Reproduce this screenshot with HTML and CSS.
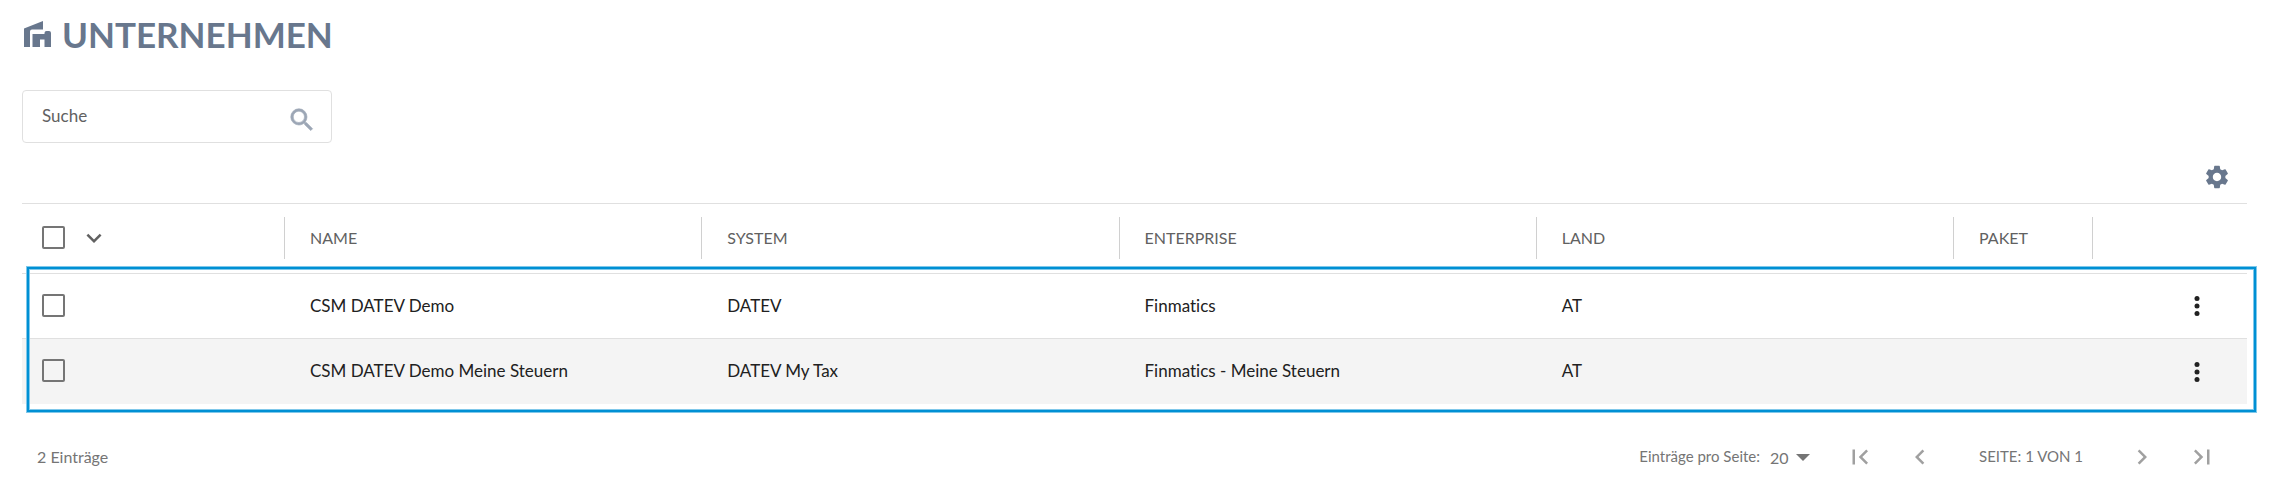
FILE: index.html
```html
<!DOCTYPE html>
<html lang="de">
<head>
<meta charset="UTF-8">
<meta name="viewport" content="width=device-width, initial-scale=1">
<title>Unternehmen</title>
<link rel="stylesheet" href="styles.css">
</head>
<body>

<h1>
  <svg class="title-icon" viewBox="0 0 27 26" aria-hidden="true"><path d="M0 7.500L19 0v8.500H8q-2 0-2 2V26H0z"/><path d="M8.500 13h12v-1q0-2 2-2h2.500q2 0 2 2v14h-6.500v-7.500h-4.500V26h-7.500z"/></svg>
  Unternehmen
</h1>

<div class="search">
  <input type="search" placeholder="Suche" aria-label="Suche">
  <svg class="icon" viewBox="0 0 24 24" aria-hidden="true"><path d="M15.5 14h-.79l-.28-.27A6.47 6.47 0 0 0 16 9.5 6.5 6.5 0 1 0 9.5 16c1.61 0 3.09-.59 4.23-1.57l.27.28v.79l5 4.99L20.49 19l-4.99-5zm-6 0C7.01 14 5 11.99 5 9.5S7.01 5 9.5 5 14 7.01 14 9.5 11.99 14 9.5 14z"/></svg>
</div>

<div class="toolbar">
  <button class="settings" aria-label="Einstellungen">
    <svg viewBox="0 0 24 24"><path d="M19.14 12.94c.04-.3.06-.61.06-.94 0-.32-.02-.64-.07-.94l2.03-1.58c.18-.14.23-.41.12-.61l-1.92-3.32c-.12-.22-.37-.29-.59-.22l-2.39.96c-.5-.38-1.03-.7-1.62-.94l-.36-2.54c-.04-.24-.24-.41-.48-.41h-3.84c-.24 0-.43.17-.47.41l-.36 2.54c-.59.24-1.13.57-1.62.94l-2.39-.96c-.22-.08-.47 0-.59.22L2.740 8.870c-.12.21-.08.47.12.61l2.03 1.58c-.05.3-.09.63-.09.94s.02.64.07.94l-2.03 1.58c-.18.14-.23.41-.12.61l1.92 3.32c.12.22.37.29.59.22l2.39-.96c.5.38 1.03.7 1.62.94l.36 2.54c.05.24.24.41.48.41h3.84c.24 0 .44-.17.47-.41l.36-2.54c.59-.24 1.13-.56 1.62-.94l2.39.96c.22.08.47 0 .59-.22l1.92-3.32c.12-.22.07-.47-.12-.61l-2.01-1.58zM12 15.600c-1.98 0-3.6-1.62-3.6-3.6s1.62-3.6 3.6-3.6 3.6 1.62 3.6 3.6-1.62 3.6-3.6 3.6z"/></svg>
  </button>
</div>

<div class="table-wrapper">
  <table>
    <thead>
      <tr>
        <th class="col-select">
          <div class="head-cell">
            <input type="checkbox" aria-label="Alle auswählen">
            <button class="select-menu" aria-label="Auswahl">
              <svg class="icon" viewBox="0 0 24 24"><path d="M16.59 8.59L12 13.17 7.41 8.59 6 10l6 6 6-6z"/></svg>
            </button>
          </div>
        </th>
        <th><div class="head-cell">Name</div></th>
        <th><div class="head-cell">System</div></th>
        <th><div class="head-cell">Enterprise</div></th>
        <th><div class="head-cell">Land</div></th>
        <th class="col-package"><div class="head-cell">Paket</div></th>
        <th class="col-actions"></th>
      </tr>
    </thead>
    <tbody>
      <tr>
        <td><input type="checkbox" aria-label="CSM DATEV Demo auswählen"></td>
        <td>CSM DATEV Demo</td>
        <td>DATEV</td>
        <td>Finmatics</td>
        <td>AT</td>
        <td></td>
        <td class="actions">
          <button aria-label="Aktionen">
            <svg class="icon" viewBox="0 0 24 24"><circle cx="12" cy="6" r="2"/><circle cx="12" cy="12" r="2"/><circle cx="12" cy="18" r="2"/></svg>
          </button>
        </td>
      </tr>
      <tr>
        <td><input type="checkbox" aria-label="CSM DATEV Demo Meine Steuern auswählen"></td>
        <td>CSM DATEV Demo Meine Steuern</td>
        <td>DATEV My Tax</td>
        <td>Finmatics - Meine Steuern</td>
        <td>AT</td>
        <td></td>
        <td class="actions">
          <button aria-label="Aktionen">
            <svg class="icon" viewBox="0 0 24 24"><circle cx="12" cy="6" r="2"/><circle cx="12" cy="12" r="2"/><circle cx="12" cy="18" r="2"/></svg>
          </button>
        </td>
      </tr>
    </tbody>
  </table>
  <div class="highlight"></div>
</div>

<footer>
  <span>2 Einträge</span>
  <div class="pagination">
    <label for="pageSize">Einträge pro Seite:</label>
    <div class="page-size">
      <select id="pageSize">
        <option>20</option>
        <option>50</option>
        <option>100</option>
      </select>
      <svg viewBox="0 0 14 7" aria-hidden="true"><path d="M0 0h14L7 7z"/></svg>
    </div>
    <button class="page-btn" aria-label="Erste Seite">
      <svg class="icon" viewBox="0 0 24 24"><path d="M18.41 16.59L13.82 12l4.59-4.59L17 6l-6 6 6 6zM6 6h2v12H6z"/></svg>
    </button>
    <button class="page-btn" aria-label="Vorherige Seite">
      <svg class="icon" viewBox="0 0 24 24"><path d="M15.41 7.41L14 6l-6 6 6 6 1.41-1.41L10.83 12z"/></svg>
    </button>
    <span class="page-info">Seite: 1 von 1</span>
    <button class="page-btn" aria-label="Nächste Seite">
      <svg class="icon" viewBox="0 0 24 24"><path d="M10 6L8.59 7.41 13.17 12l-4.58 4.59L10 18l6-6z"/></svg>
    </button>
    <button class="page-btn" aria-label="Letzte Seite">
      <svg class="icon" viewBox="0 0 24 24"><path d="M5.59 7.41L10.18 12l-4.59 4.59L7 18l6-6-6-6zM16 6h2v12h-2z"/></svg>
    </button>
  </div>
</footer>

</body>
</html>
```

FILE: styles.css
```css
:root {
  --text: #212121;
  --text-head: #616161;
  --text-muted: #757575;
  --brand: #68778d;
  --line: #e0e0e0;
  --highlight: #0090d4;
}
* {
  box-sizing: border-box;
}
body {
  margin: 0;
  padding: 10px 23px 0 22px;
  background: #fff;
  color: var(--text);
  font-family: Lato, "Liberation Sans", sans-serif;
  font-size: 17px;
  font-variant-ligatures: none;
}
button {
  display: flex;
  align-items: center;
  justify-content: center;
  padding: 0;
  border: 0;
  background: none;
  color: inherit;
  cursor: pointer;
}
svg {
  display: block;
  fill: currentColor;
}
.icon {
  width: 30px;
  height: 30px;
}
h1 {
  display: flex;
  align-items: center;
  gap: 11px;
  margin: 0 0 32px;
  padding-left: 2px;
  color: var(--brand);
  font-size: 35px;
  line-height: 48px;
  text-transform: uppercase;
}
.title-icon {
  width: 27px;
  height: 26px;
}
.search {
  display: flex;
  align-items: center;
  width: 310px;
  height: 53px;
  padding: 0 14px 0 19px;
  border: 1px solid var(--line);
  border-radius: 4px;
  color: #9ca6b5;
}
.search input {
  flex: 1;
  min-width: 0;
  padding: 0 0 2px;
  border: 0;
  outline: 0;
  background: none;
  color: var(--text);
  font: inherit;
}
.search input::placeholder {
  color: var(--text-head);
}
.search .icon {
  margin-top: 6px;
  stroke: currentColor;
  stroke-width: 0.5;
}
.toolbar {
  display: flex;
  justify-content: flex-end;
  padding: 20px 16px 12px 0;
  color: var(--brand);
}
.settings svg {
  width: 28px;
  height: 28px;
}
.table-wrapper {
  position: relative;
}
table {
  width: 100%;
  table-layout: fixed;
  border-collapse: separate;
  border-spacing: 0;
}
.col-select {
  width: 263px;
}
.col-package {
  width: 139px;
}
.col-actions {
  width: 154px;
}
th {
  height: 71px;
  padding: 0 0 2px;
  border-top: 1px solid var(--line);
  border-bottom: 1px solid var(--line);
  color: var(--text-head);
  font-size: 16px;
  font-weight: 400;
  text-align: left;
  text-transform: uppercase;
}
.head-cell {
  display: flex;
  align-items: center;
  height: 42px;
  padding-left: 25px;
  border-right: 1px solid #d0d0d0;
}
.col-select .head-cell {
  gap: 14px;
  padding-left: 20px;
}
td {
  height: 65px;
  padding: 0 0 2px 25px;
}
td:first-child {
  padding-left: 20px;
}
tbody tr:not(:last-child) td {
  border-bottom: 1px solid var(--line);
}
tbody tr:nth-child(even) {
  background: #f4f4f4;
}
input[type="checkbox"] {
  display: block;
  width: 23px;
  height: 23px;
  margin: 0;
  border: 2px solid #757575;
  border-radius: 2px;
  appearance: none;
}
input[type="checkbox"]:checked {
  background: var(--brand);
}
td.actions {
  padding-bottom: 0;
}
.actions button {
  margin-left: auto;
  margin-right: 35px;
}
/* frame around the data rows, slightly wider than the table */
.highlight {
  position: absolute;
  top: 64px;
  right: -9px;
  bottom: -8px;
  left: 5px;
  border: 2px solid var(--highlight);
  box-shadow: 0 0 0 1px #80c8ea, inset 0 0 0 1px #80c8ea;
  pointer-events: none;
}
footer {
  display: flex;
  align-items: center;
  justify-content: space-between;
  padding: 23px 15px 4px;
  color: var(--text-muted);
  font-size: 16px;
}
footer span,
footer label {
  padding-bottom: 2px;
}
.pagination {
  display: flex;
  align-items: center;
  font-size: 15px;
}
.page-size {
  display: flex;
  align-items: center;
  margin: 0 20px 0 10px;
}
.page-size select {
  width: 26px;
  padding: 0;
  border: 0;
  background: none;
  color: inherit;
  font: inherit;
  font-size: 16px;
  appearance: none;
}
.page-size svg {
  width: 14px;
  height: 7px;
}
.page-btn {
  width: 60px;
  height: 60px;
  color: #a0a0a0;
}
.page-info {
  min-width: 162px;
  text-align: center;
  text-transform: uppercase;
}
```
